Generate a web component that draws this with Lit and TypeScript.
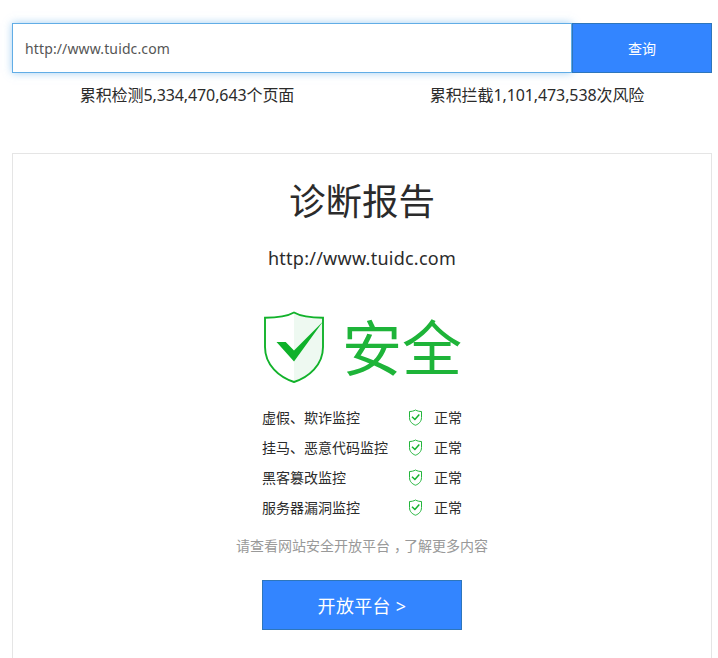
import { LitElement, html, css } from "lit";
import { customElement } from "lit/decorators.js";

const bigShield = html`
  <svg class="big" viewBox="0 0 62 72" aria-hidden="true">
    <path d="M31 2V70C46 65 60 55 60 34V7C47 7 38 6 31 2Z" fill="#eef9f1" />
    <path
      d="M31 1.500C24 5.500 13 6.700 2 6.700V36C2 54 16 66 31 71C46 66 60 54 60 36V6.700C49 6.700 38 5.500 31 1.500Z"
      fill="none" stroke="#12b22b" stroke-width="1.900"
    />
    <path d="M13.500 31H22.700L31 39.500L60 10.500L31 50.500Z" fill="#0fb12a" />
  </svg>
`;

const smallShield = html`
  <svg class="small" viewBox="0 0 15 17" aria-hidden="true">
    <path
      d="M7.500 1C5.700 2.100 3.500 2.500 1.500 2.500V8.500C1.500 12.600 4.200 15 7.500 16.200C10.800 15 13.500 12.600 13.500 8.500V2.500C11.500 2.500 9.300 2.100 7.500 1Z"
      fill="none" stroke="#22b53b"
    />
    <path d="M4 7.800L6.900 10.500L11.300 5.400" fill="none" stroke="#12b22b" stroke-width="1.500" />
  </svg>
`;

@customElement("app-root")
export class AppRoot extends LitElement {
  static styles = css`
    :host {
      display: block;
      height: 658px;
      overflow: hidden;
      background: #fff;
      color: #2b2b2b;
      font-family: "Noto Sans", "Noto Sans CJK SC", sans-serif;
      font-size: 14px;
    }
    * { box-sizing: border-box; }
    .page { width: 700px; margin-left: 12px; padding-top: 23px; }
    .search { display: flex; height: 50px; }
    .field {
      width: 560px;
      border: 1px solid #61ade6;
      box-shadow: 0 0 8px rgba(102, 175, 233, 0.6);
      padding: 0 12px;
      line-height: 50px;
      color: #555;
      letter-spacing: 0.13px;
    }
    .btn {
      display: block;
      margin: 0;
      padding: 0;
      border: 1px solid #2e76bb;
      background: #3385ff;
      color: #fff;
      font: inherit;
      position: relative;
    }
    .query { width: 140px; }
    .stats {
      display: flex;
      height: 46px;
      font-size: 16px;
      line-height: 44px;
      letter-spacing: -0.1px;
      text-align: center;
    }
    .stats div { flex: 1; }
    .report {
      display: flex;
      flex-direction: column;
      align-items: center;
      height: 540px;
      margin-top: 34px;
      border: 1px solid #e5e5e5;
    }
    h1 { margin: 20px 0 0; font-size: 36.500px; font-weight: 400; line-height: 54px; height: 56px; }
    .url { margin-top: 14px; font-size: 18px; line-height: 28px; letter-spacing: 0.25px; }
    .verdict { display: flex; width: 200px; height: 74px; margin-top: 39px; align-items: center; }
    .big { width: 62px; height: 72px; margin: -2px 0 0 1px; flex: none; }
    .safe { margin-left: 17px; font-size: 60px; line-height: 74px; color: #1eb439; white-space: nowrap; }
    .checks { width: 200px; margin-top: 18px; }
    .row { display: flex; align-items: center; height: 30px; line-height: 30px; }
    .name { width: 146px; white-space: nowrap; }
    .small { width: 15px; height: 17px; margin: -1px 11px 0 0; flex: none; }
    .hint { height: 30px; margin-top: 8px; line-height: 30px; color: #999; }
    .hint span { margin-left: 4px; letter-spacing: -4px; }
    .open { width: 200px; height: 50px; margin-top: 19px; font-size: 18px; letter-spacing: 0.3px; }
  `;

  private checks = ["虚假、欺诈监控", "挂马、恶意代码监控", "黑客篡改监控", "服务器漏洞监控"];

  render() {
    return html`
      <div class="page">
        <div class="search">
          <div class="field">http://www.tuidc.com</div>
          <button class="btn query">查询</button>
        </div>
        <div class="stats">
          <div>累积检测5,334,470,643个页面</div>
          <div>累积拦截1,101,473,538次风险</div>
        </div>
        <div class="report">
          <h1>诊断报告</h1>
          <div class="url">http://www.tuidc.com</div>
          <div class="verdict">${bigShield}<span class="safe">安全</span></div>
          <div class="checks">
            ${this.checks.map(
              (name) => html`<div class="row"><span class="name">${name}</span>${smallShield}<span>正常</span></div>`
            )}
          </div>
          <div class="hint">请查看网站安全开放平台<span>，</span>了解更多内容</div>
          <button class="btn open">开放平台 &gt;</button>
        </div>
      </div>
    `;
  }
}
